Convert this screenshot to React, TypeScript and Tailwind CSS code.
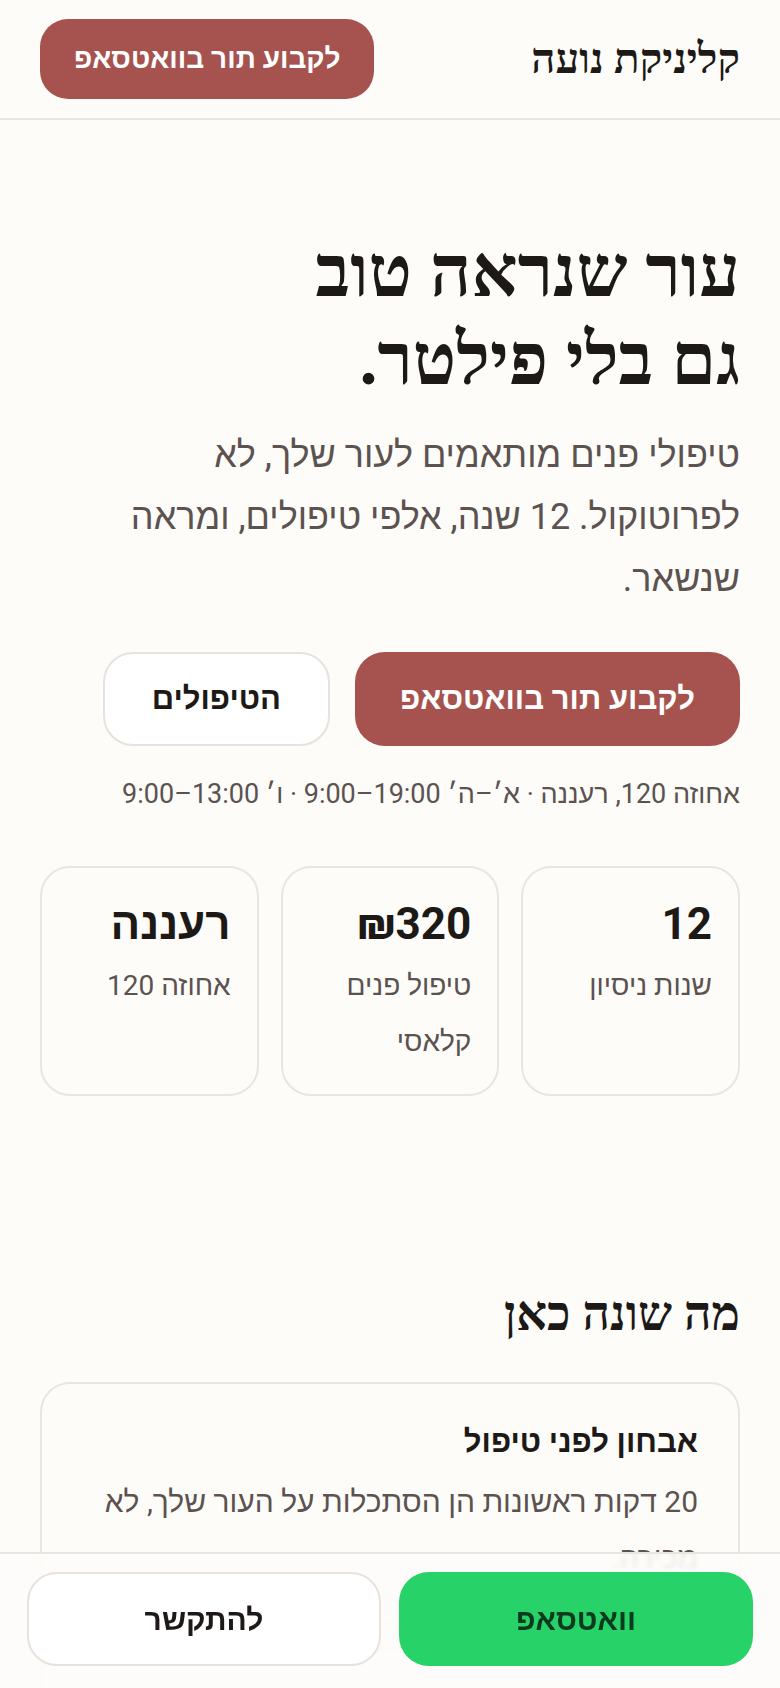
const features = [
  {
    title: "אבחון לפני טיפול",
    text: "20 דקות ראשונות הן הסתכלות על העור שלך, לא מכירה.",
  },
  {
    title: "חומרים מקצועיים בלבד",
    text: "עובדת עם סדרות מקצועיות שנבחרות לפי סוג העור והעונה.",
  },
  {
    title: "מעקב אחרי הטיפול",
    text: "הנחיות ברורות לבית, ומענה בוואטסאפ גם אחרי שיצאת.",
  },
];

const stats = [
  { value: "12", label: "שנות ניסיון" },
  { value: "₪320", label: "טיפול פנים קלאסי" },
  { value: "רעננה", label: "אחוזה 120" },
];

export default function App() {
  return (
    <div
      dir="rtl"
      className="relative h-[1688px] overflow-hidden bg-[#fdfcf9] font-['Roboto',sans-serif] text-[#1c1917]"
    >
      <header className="flex h-[120px] items-center justify-between border-b-2 border-[#ebe5df] px-10">
        <div className="font-['Liberation_Serif',serif] text-[42px] font-bold leading-none">
          קליניקת נועה
        </div>
        <a className="flex h-20 items-center rounded-[28px] bg-[#a65350] px-[34px] text-[28px] font-bold text-white">
          לקבוע תור בוואטסאפ
        </a>
      </header>

      <main className="px-10">
        <section className="pb-[188px] pt-[108px]">
          <h1 className="font-['Liberation_Serif',serif] text-[72px] font-bold leading-[88px] text-[#1c1917]">
            עור שנראה טוב
            <br />
            גם בלי פילטר.
          </h1>
          <p className="mt-5 max-w-[640px] text-[36px] leading-[62px] text-[#5c5250]">
            טיפולי פנים מותאמים לעור שלך, לא לפרוטוקול. 12 שנה, אלפי טיפולים, ומראה שנשאר.
          </p>

          <div className="mt-[42px] flex gap-[25px]">
            <a className="flex h-[94px] items-center rounded-[30px] bg-[#a65350] px-[45px] text-[31px] font-bold text-white">
              לקבוע תור בוואטסאפ
            </a>
            <a className="flex h-[94px] items-center rounded-[30px] border-2 border-[#e8e2dc] bg-white px-[47px] text-[31px] font-bold text-[#1c1917]">
              הטיפולים
            </a>
          </div>

          <p className="mt-7 text-[27px] leading-[40px] text-[#5c5250]">
            אחוזה 120, רעננה · א׳–ה׳ <span dir="ltr">9:00–19:00</span> · ו׳{" "}
            <span dir="ltr">9:00–13:00</span>
          </p>

          <div className="mt-[52px] grid grid-cols-3 gap-[22px]">
            {stats.map((s) => (
              <div
                key={s.value}
                className="rounded-[30px] border-2 border-[#ebe5df] px-[26px] pb-6 pt-[30px]"
              >
                <div className="text-[44px] font-bold leading-[52px] text-[#1c1917]">{s.value}</div>
                <div className="mt-2 text-[28px] leading-[56px] text-[#5c5250]">{s.label}</div>
              </div>
            ))}
          </div>
        </section>

        <section>
          <h2 className="font-['Liberation_Serif',serif] text-[48px] font-bold leading-[60px] text-[#1c1917]">
            מה שונה כאן
          </h2>
          <div className="mt-[38px] flex flex-col gap-6">
            {features.map((f) => (
              <div key={f.title} className="rounded-[30px] border-2 border-[#ebe5df] px-10 pb-9 pt-[34px]">
                <div className="text-[31px] font-bold leading-[48px] text-[#1c1917]">{f.title}</div>
                <p className="mt-2 text-[30px] leading-[56px] text-[#5c5250]">{f.text}</p>
              </div>
            ))}
          </div>
        </section>
      </main>

      <div className="absolute inset-x-0 bottom-0 grid grid-cols-2 gap-[18px] border-t-2 border-[#ebe5df] bg-[#fdfcf9]/90 px-[27px] pb-[22px] pt-[18px] backdrop-blur-[2px]">
        <a className="flex h-[94px] items-center justify-center rounded-[30px] bg-[#27d368] text-[30px] font-bold text-[#0b3a1e]">
          וואטסאפ
        </a>
        <a className="flex h-[94px] items-center justify-center rounded-[30px] border-2 border-[#e8e2dc] bg-white text-[30px] font-bold text-[#1c1917]">
          להתקשר
        </a>
      </div>
    </div>
  );
}
